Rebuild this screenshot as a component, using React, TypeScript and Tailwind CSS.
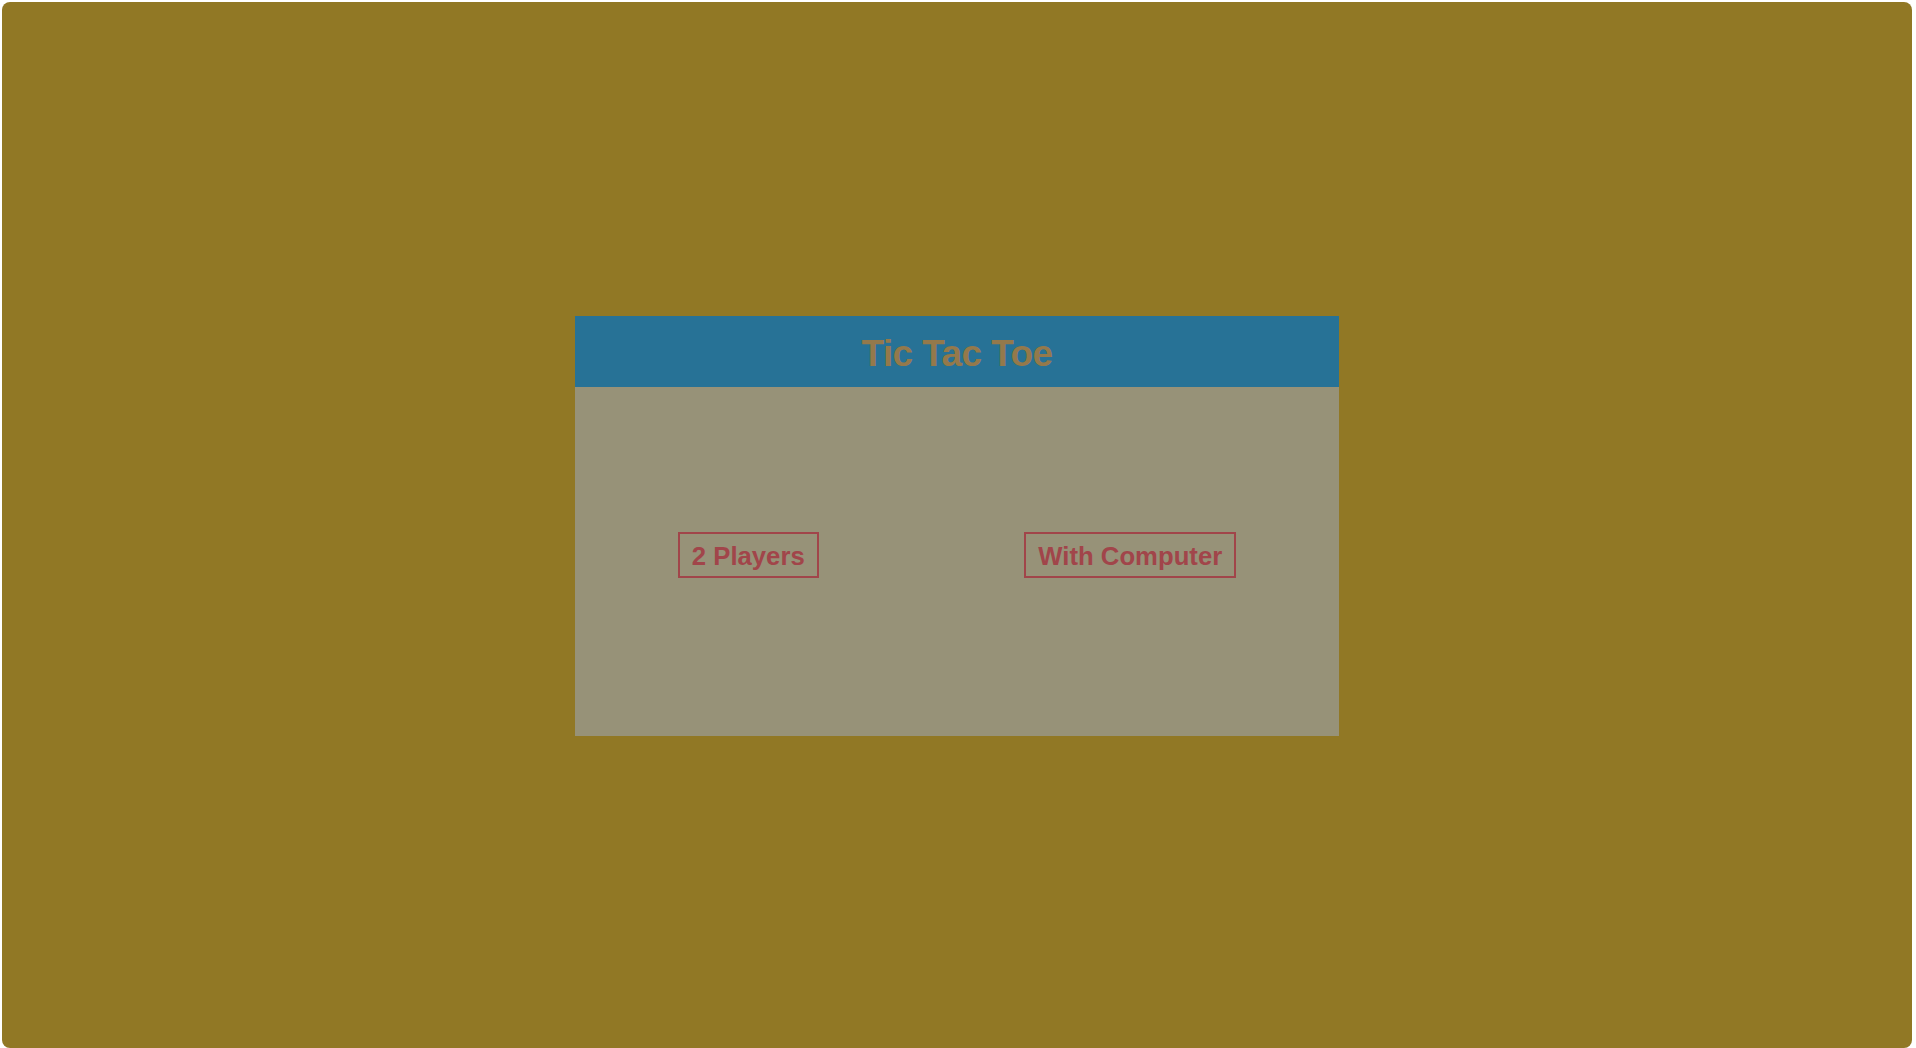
import React from 'react'

const choices = ["2 Players", "With Computer"]

export default function App() {
  return (
    <div className="w-[1916px] h-[1048px] overflow-hidden bg-white pt-[2px] pl-[2px]">
      <div className="w-[1910px] h-[1046px] rounded-lg bg-[#917825] pt-[314px] flex justify-center" style={{ fontFamily: '"Liberation Sans", Arial, sans-serif' }}>
        <div className="w-[764px] h-[420px] bg-[#979278] flex flex-col">
          <div className="h-[71px] bg-[#277296] flex items-center justify-center pt-[4px]">
            <h1 className="text-[37px] font-bold tracking-[-0.6px] text-[#94794b] leading-none">Tic Tac Toe</h1>
          </div>
          <div className="flex-1 flex justify-around items-start pt-[145px]">
            {choices.map(c => (
              <button key={c} className="h-[46px] px-[12px] pt-[3px] flex items-center border-2 border-[#a1454a] text-[#a1454a] text-[25.7px] font-bold leading-none">
                {c}
              </button>
            ))}
          </div>
        </div>
      </div>
    </div>
  )
}
